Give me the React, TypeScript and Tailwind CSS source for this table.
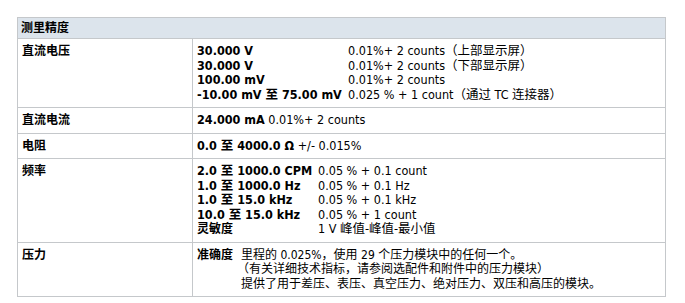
export default function App() {
    return (
        <div className="min-h-screen bg-white pt-[17px] pl-[17px] text-[12.5px] leading-[14.5px] text-black font-['DejaVu_Sans_Condensed','DejaVu_Sans','Noto_Sans_CJK_SC',sans-serif] [font-stretch:condensed]">
            <div className="w-[649px] border border-[#c5c8cb]">
                {/* 表头 */}
                <div className="h-[21px] bg-[#dce4ec] border-b border-[#c5c8cb] px-[3px] flex items-center font-bold text-[12px]">
                    测里精度
                </div>

                {/* 直流电压 */}
                <div className="grid grid-cols-[175px_1fr] border-b border-[#c5c8cb]">
                    <div className="border-r border-[#c5c8cb] px-[4px] py-[5px] font-bold text-[12px]">直流电压</div>
                    <div className="pl-[4px] py-[5px] grid grid-cols-[151px_1fr]">
                        <span className="font-bold">30.000 V</span>
                        <span>0.01%+ 2 counts（上部显示屏）</span>
                        <span className="font-bold">30.000 V</span>
                        <span>0.01%+ 2 counts（下部显示屏）</span>
                        <span className="font-bold">100.00 mV</span>
                        <span>0.01%+ 2 counts</span>
                        <span className="font-bold whitespace-nowrap">-10.00 mV 至 75.00 mV</span>
                        <span>0.025 % + 1 count（通过 TC 连接器）</span>
                    </div>
                </div>

                {/* 直流电流 */}
                <div className="grid grid-cols-[175px_1fr] border-b border-[#c5c8cb]">
                    <div className="border-r border-[#c5c8cb] px-[4px] py-[5px] font-bold text-[12px]">直流电流</div>
                    <div className="pl-[4px] py-[5px]">
                        <span className="font-bold">24.000 mA</span> 0.01%+ 2 counts
                    </div>
                </div>

                {/* 电阻 */}
                <div className="grid grid-cols-[175px_1fr] border-b border-[#c5c8cb]">
                    <div className="border-r border-[#c5c8cb] px-[4px] py-[5px] font-bold text-[12px]">电阻</div>
                    <div className="pl-[4px] py-[5px]">
                        <span className="font-bold">0.0 至 4000.0 Ω</span> +/- 0.015%
                    </div>
                </div>

                {/* 频率 */}
                <div className="grid grid-cols-[175px_1fr] border-b border-[#c5c8cb]">
                    <div className="border-r border-[#c5c8cb] px-[4px] py-[5px] font-bold text-[12px]">频率</div>
                    <div className="pl-[4px] py-[5px] grid grid-cols-[121px_1fr]">
                        <span className="font-bold whitespace-nowrap">2.0 至 1000.0 CPM</span>
                        <span>0.05 % + 0.1 count</span>
                        <span className="font-bold whitespace-nowrap">1.0 至 1000.0 Hz</span>
                        <span>0.05 % + 0.1 Hz</span>
                        <span className="font-bold whitespace-nowrap">1.0 至 15.0 kHz</span>
                        <span>0.05 % + 0.1 kHz</span>
                        <span className="font-bold whitespace-nowrap">10.0 至 15.0 kHz</span>
                        <span>0.05 % + 1 count</span>
                        <span className="font-bold text-[12px]">灵敏度</span>
                        <span>1 V 峰值-峰值-最小值</span>
                    </div>
                </div>

                {/* 压力 */}
                <div className="grid grid-cols-[175px_1fr]">
                    <div className="border-r border-[#c5c8cb] px-[4px] py-[5px] font-bold text-[12px]">压力</div>
                    <div className="pl-[4px] py-[5px] grid grid-cols-[44px_1fr] text-[12px]">
                        <span className="font-bold">准确度</span>
                        <div>
                            <div>里程的 0.025%，使用 29 个压力模块中的任何一个。</div>
                            <div className="-ml-[4px]">（有关详细技术指标，请参阅选配件和附件中的压力模块）</div>
                            <div>提供了用于差压、表压、真空压力、绝对压力、双压和高压的模块。</div>
                        </div>
                    </div>
                </div>
            </div>
        </div>
    )
}
